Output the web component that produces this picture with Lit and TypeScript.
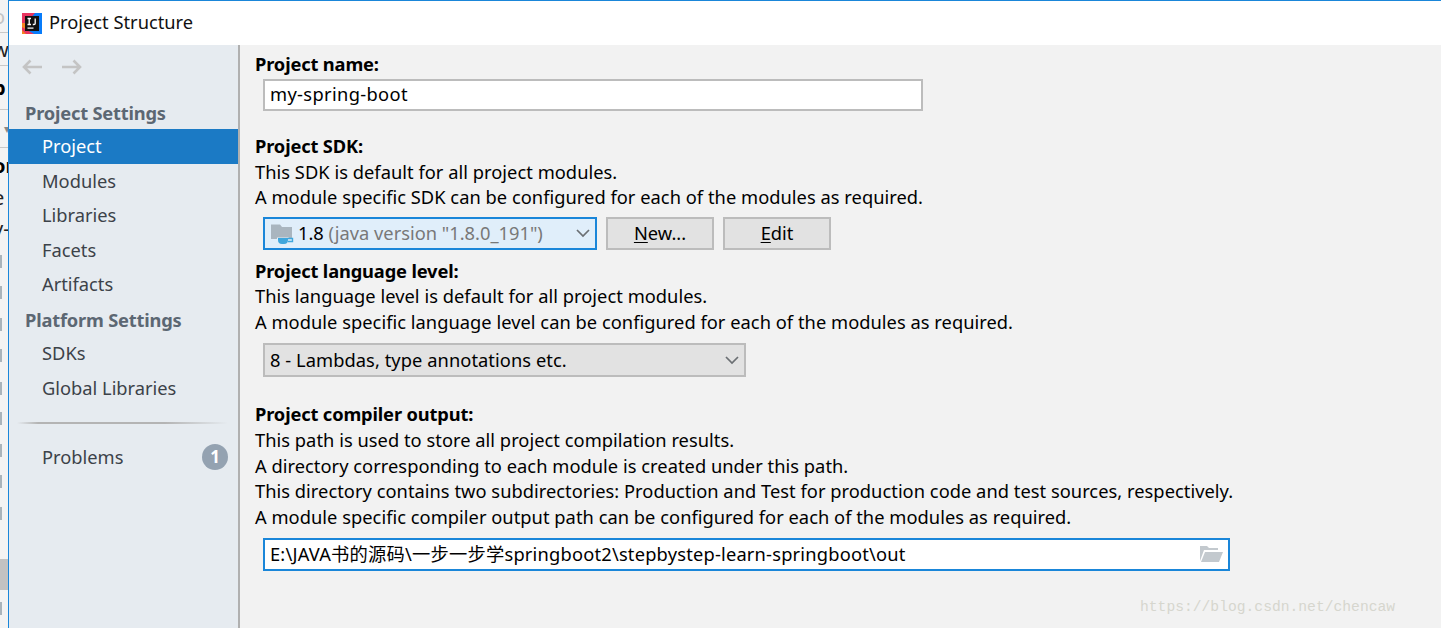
import { LitElement, html, css } from "lit";
import { customElement } from "lit/decorators.js";

const chevron = html`<svg class="chev" width="16" height="10" viewBox="0 0 16 10"><path d="M2 2 L8 8 L14 2" fill="none" stroke="#6b6f73" stroke-width="1.7"/></svg>`;

type StripRow = { h: number; text?: string; kind: string };
const stripRows: StripRow[] = [
  { h: 33, text: "o", kind: "faded line" },
  { h: 33, text: "w", kind: "line" },
  { h: 44, text: "b", kind: "bold line" },
  { h: 38, text: "▾", kind: "tri line" },
  { h: 34, text: "or", kind: "bold" },
  { h: 30, text: "e", kind: "" },
  { h: 32, text: "y-", kind: "" },
  { h: 11, kind: "" },
  { h: 13, kind: "bar" }, { h: 18, kind: "" },
  { h: 13, kind: "bar" }, { h: 19, kind: "" },
  { h: 13, kind: "bar" }, { h: 18, kind: "" },
  { h: 13, kind: "bar" }, { h: 20, kind: "" },
  { h: 13, kind: "bar" }, { h: 17, kind: "" },
  { h: 13, kind: "bar" }, { h: 19, kind: "" },
  { h: 13, kind: "bar" }, { h: 18, kind: "" },
  { h: 13, kind: "bar" }, { h: 19, kind: "" },
  { h: 13, kind: "bar" }, { h: 39, kind: "" },
  { h: 31, kind: "block" }, { h: 12, kind: "" },
  { h: 13, kind: "bar" },
];

@customElement("app-root")
export class AppRoot extends LitElement {
  static styles = css`
    :host { display: block; width: 1441px; height: 628px; overflow: hidden; font-family: "Noto Sans", "Noto Sans CJK SC", sans-serif; font-size: 18.3px; color: #000; }
    .page { display: flex; height: 628px; background: #f0f0f0; position: relative; }
    .strip { width: 8px; flex: none; overflow: hidden; background: #f3f3f3; display: flex; flex-direction: column; font-size: 20px; }
    .sr { flex: none; box-sizing: border-box; display: flex; align-items: center; overflow: hidden; white-space: nowrap; color: #222; }
    .sr span { margin-left: -7px; }
    .sr.line { border-bottom: 1px solid #c8c8c8; }
    .sr.bold { font-weight: 700; color: #000; }
    .sr.faded { color: #c4c4c4; }
    .sr.tri { color: #888; font-size: 12px; align-items: flex-start; padding-top: 10px; }
    .sr.tri span { margin-left: 4px; }
    .sr.bar::before { content: ""; width: 2px; height: 100%; background: #aab4bb; }
    .sr.block { background: #c2c2c2; }
    .win { flex: 1; display: flex; flex-direction: column; border-left: 1px solid #1a86d9; border-top: 1px solid #1a86d9; min-width: 0; }
    .title { height: 44px; flex: none; background: #fff; display: flex; align-items: center; gap: 7px; padding-left: 13px; color: #111; }
    .title span { margin-bottom: 3px; }
    .body { flex: 1; display: flex; min-height: 0; }
    .side { width: 229px; flex: none; background: #e6ebf0; border-right: 2px solid #b0b0b0; display: flex; flex-direction: column; }
    .nav { height: 43px; flex: none; display: flex; align-items: center; gap: 20px; padding: 0 0 0 13px; }
    .head { font-weight: 700; color: #5c6773; padding-left: 16px; height: 34px; display: flex; align-items: center; letter-spacing: -0.2px; }
    .head.first { margin-top: 7px; }
    .head.second { padding-top: 1px; box-sizing: border-box; }
    .item { box-sizing: border-box; height: 34.5px; padding: 0 0 1px 33px; display: flex; align-items: center; color: #3c4249; }
    .item.low { padding-bottom: 0; }
    .item.high { padding-bottom: 2px; }
    .item.sel { background: #1b7ac5; color: #fff; }
    .sep { height: 2px; margin: 17px 10px 17px 8px; background: linear-gradient(90deg, #e6ebf0, #b4b4b4 10%, #b4b4b4 70%, #e6ebf0); }
    .badge { margin-left: auto; margin-right: 10px; width: 26px; height: 26px; border-radius: 50%; background: #94a2b1; color: #fff; font-size: 17px; font-weight: 700; display: flex; align-items: center; justify-content: center; }
    .main { flex: 1; background: #f2f2f2; padding: 6px 0 0 15px; display: flex; flex-direction: column; }
    .lab { font-weight: 700; line-height: 26px; letter-spacing: -0.15px; }
    .lab.sdkl { line-height: 25.5px; margin-top: 22px; }
    .lab.lang { line-height: 25.5px; }
    .lab.out { margin-top: 24px; line-height: 26.5px; }
    .txt { line-height: 25.5px; letter-spacing: 0.03px; }
    .field { box-sizing: border-box; display: flex; align-items: center; height: 32px; border: 2px solid #bcbcbc; margin-left: 8px; padding-left: 5px; }
    .field > span { margin-bottom: 3px; }
    .name { width: 660px; margin-top: 2px; background: #fff; }
    .name > span { letter-spacing: 0.35px; }
    .row { display: flex; gap: 9px; margin: 7px 0 8px; }
    .sdk { width: 334px; background: #e0eefa; border-color: #1a86d9; padding-left: 6px; height: 33px; gap: 3px; }
    .sdk > span { margin-bottom: 1px; }
    .gray { color: #787878; }
    .chev { margin-left: auto; margin-right: 4px; }
    .btn { box-sizing: border-box; height: 33px; width: 108px; border: 2px solid #bcbcbc; background: #e2e2e2; display: flex; align-items: center; justify-content: center; }
    .btn span { margin-bottom: 1px; }
    u { text-underline-offset: 2px; }
    .level { width: 483px; height: 34px; background: #e2e2e2; margin-top: 8.5px; }
    .level > span { margin-bottom: 0; letter-spacing: 0.06px; }
    .path { width: 967px; height: 33px; background: #fff; border-color: #1a86d9; margin-top: 8.5px; }
    .path > span { letter-spacing: 0.2px; }
    .open { margin-left: auto; margin-right: 5px; }
    .wm { position: absolute; left: 1140px; top: 599px; font-family: "Liberation Mono", "DejaVu Sans Mono", monospace; font-size: 14.66px; color: #d6d6ce; }
  `;
  render() {
    return html`<div class="page">
      <div class="strip">
        ${stripRows.map((r) => html`<div class="sr ${r.kind}" style="height:${r.h}px">${r.text ? html`<span>${r.text}</span>` : ""}</div>`)}
      </div>
      <div class="win">
        <div class="title">
          <svg width="20" height="21" viewBox="0 0 20 21"><rect width="20" height="21" fill="#087cfa"/><path d="M0 0H13L6 8L0 11Z" fill="#e8345f"/><path d="M0 10H4V21H0Z" fill="#f58220"/><path d="M0 17L4 21H12L0 14Z" fill="#e8345f"/><rect x="3" y="3" width="14" height="15" fill="#111"/><path d="M5.5 5.5H9M7.2 5.5V11.5M5.5 11.5H9M13.2 5.5V10.5Q13.2 11.5 12 11.5H10.8" fill="none" stroke="#fff" stroke-width="1.3"/><rect x="5.5" y="14.5" width="6" height="1.2" fill="#fff"/></svg>
          <span>Project Structure</span>
        </div>
        <div class="body">
          <div class="side">
            <div class="nav">
              <svg width="20" height="16" viewBox="0 0 20 16"><path d="M20 8H2M8.5 1.5 L2 8 L8.5 14.5" fill="none" stroke="#c4c4c4" stroke-width="2.6"/></svg>
              <svg width="20" height="16" viewBox="0 0 20 16"><path d="M0 8H18M11.5 1.5 L18 8 L11.5 14.5" fill="none" stroke="#c4c4c4" stroke-width="2.6"/></svg>
            </div>
            <div class="head first">Project Settings</div>
            <div class="item sel">Project</div>
            <div class="item">Modules</div>
            <div class="item">Libraries</div>
            <div class="item">Facets</div>
            <div class="item">Artifacts</div>
            <div class="head second">Platform Settings</div>
            <div class="item">SDKs</div>
            <div class="item low">Global Libraries</div>
            <div class="sep"></div>
            <div class="item high">Problems<span class="badge">1</span></div>
          </div>
          <div class="main">
            <div class="lab">Project name:</div>
            <div class="field name"><span>my-spring-boot</span></div>
            <div class="lab sdkl">Project SDK:</div>
            <div class="txt">This SDK is default for all project modules.</div>
            <div class="txt">A module specific SDK can be configured for each of the modules as required.</div>
            <div class="row">
              <div class="field sdk">
                <svg width="24" height="24" viewBox="0 0 24 24"><path d="M0 3.5H9L11 6H21V18H0Z" fill="#a9b5bf"/><path d="M6 16.5H18V19A5 5 0 0 1 13 24H11A5 5 0 0 1 6 19Z" fill="#e0eefa"/><path d="M7 17H17V19A4 4 0 0 1 13 23H11A4 4 0 0 1 7 19Z" fill="#3fa6dc"/><path d="M17 17.5H21.5V20.5H17" fill="none" stroke="#3fa6dc" stroke-width="1.4"/></svg>
                <span>1.8 <span class="gray">(java version "1.8.0_191")</span></span>${chevron}
              </div>
              <div class="btn"><span><u>N</u>ew...</span></div>
              <div class="btn"><span><u>E</u>dit</span></div>
            </div>
            <div class="lab lang">Project language level:</div>
            <div class="txt">This language level is default for all project modules.</div>
            <div class="txt">A module specific language level can be configured for each of the modules as required.</div>
            <div class="field level"><span>8 - Lambdas, type annotations etc.</span>${chevron}</div>
            <div class="lab out">Project compiler output:</div>
            <div class="txt">This path is used to store all project compilation results.</div>
            <div class="txt">A directory corresponding to each module is created under this path.</div>
            <div class="txt">This directory contains two subdirectories: Production and Test for production code and test sources, respectively.</div>
            <div class="txt">A module specific compiler output path can be configured for each of the modules as required.</div>
            <div class="field path"><span>E:\\JAVA书的源码\\一步一步学springboot2\\stepbystep-learn-springboot\\out</span>
              <svg class="open" width="24" height="18" viewBox="0 0 24 18"><path d="M1 16V1H8L10 3H19V5H5L1 16Z" fill="#c3c9ce"/><path d="M6 7H24L20 17H2Z" fill="#c3c9ce"/></svg>
            </div>
          </div>
        </div>
      </div>
      <div class="wm">https://blog.csdn.net/chencaw</div>
    </div>`;
  }
}
